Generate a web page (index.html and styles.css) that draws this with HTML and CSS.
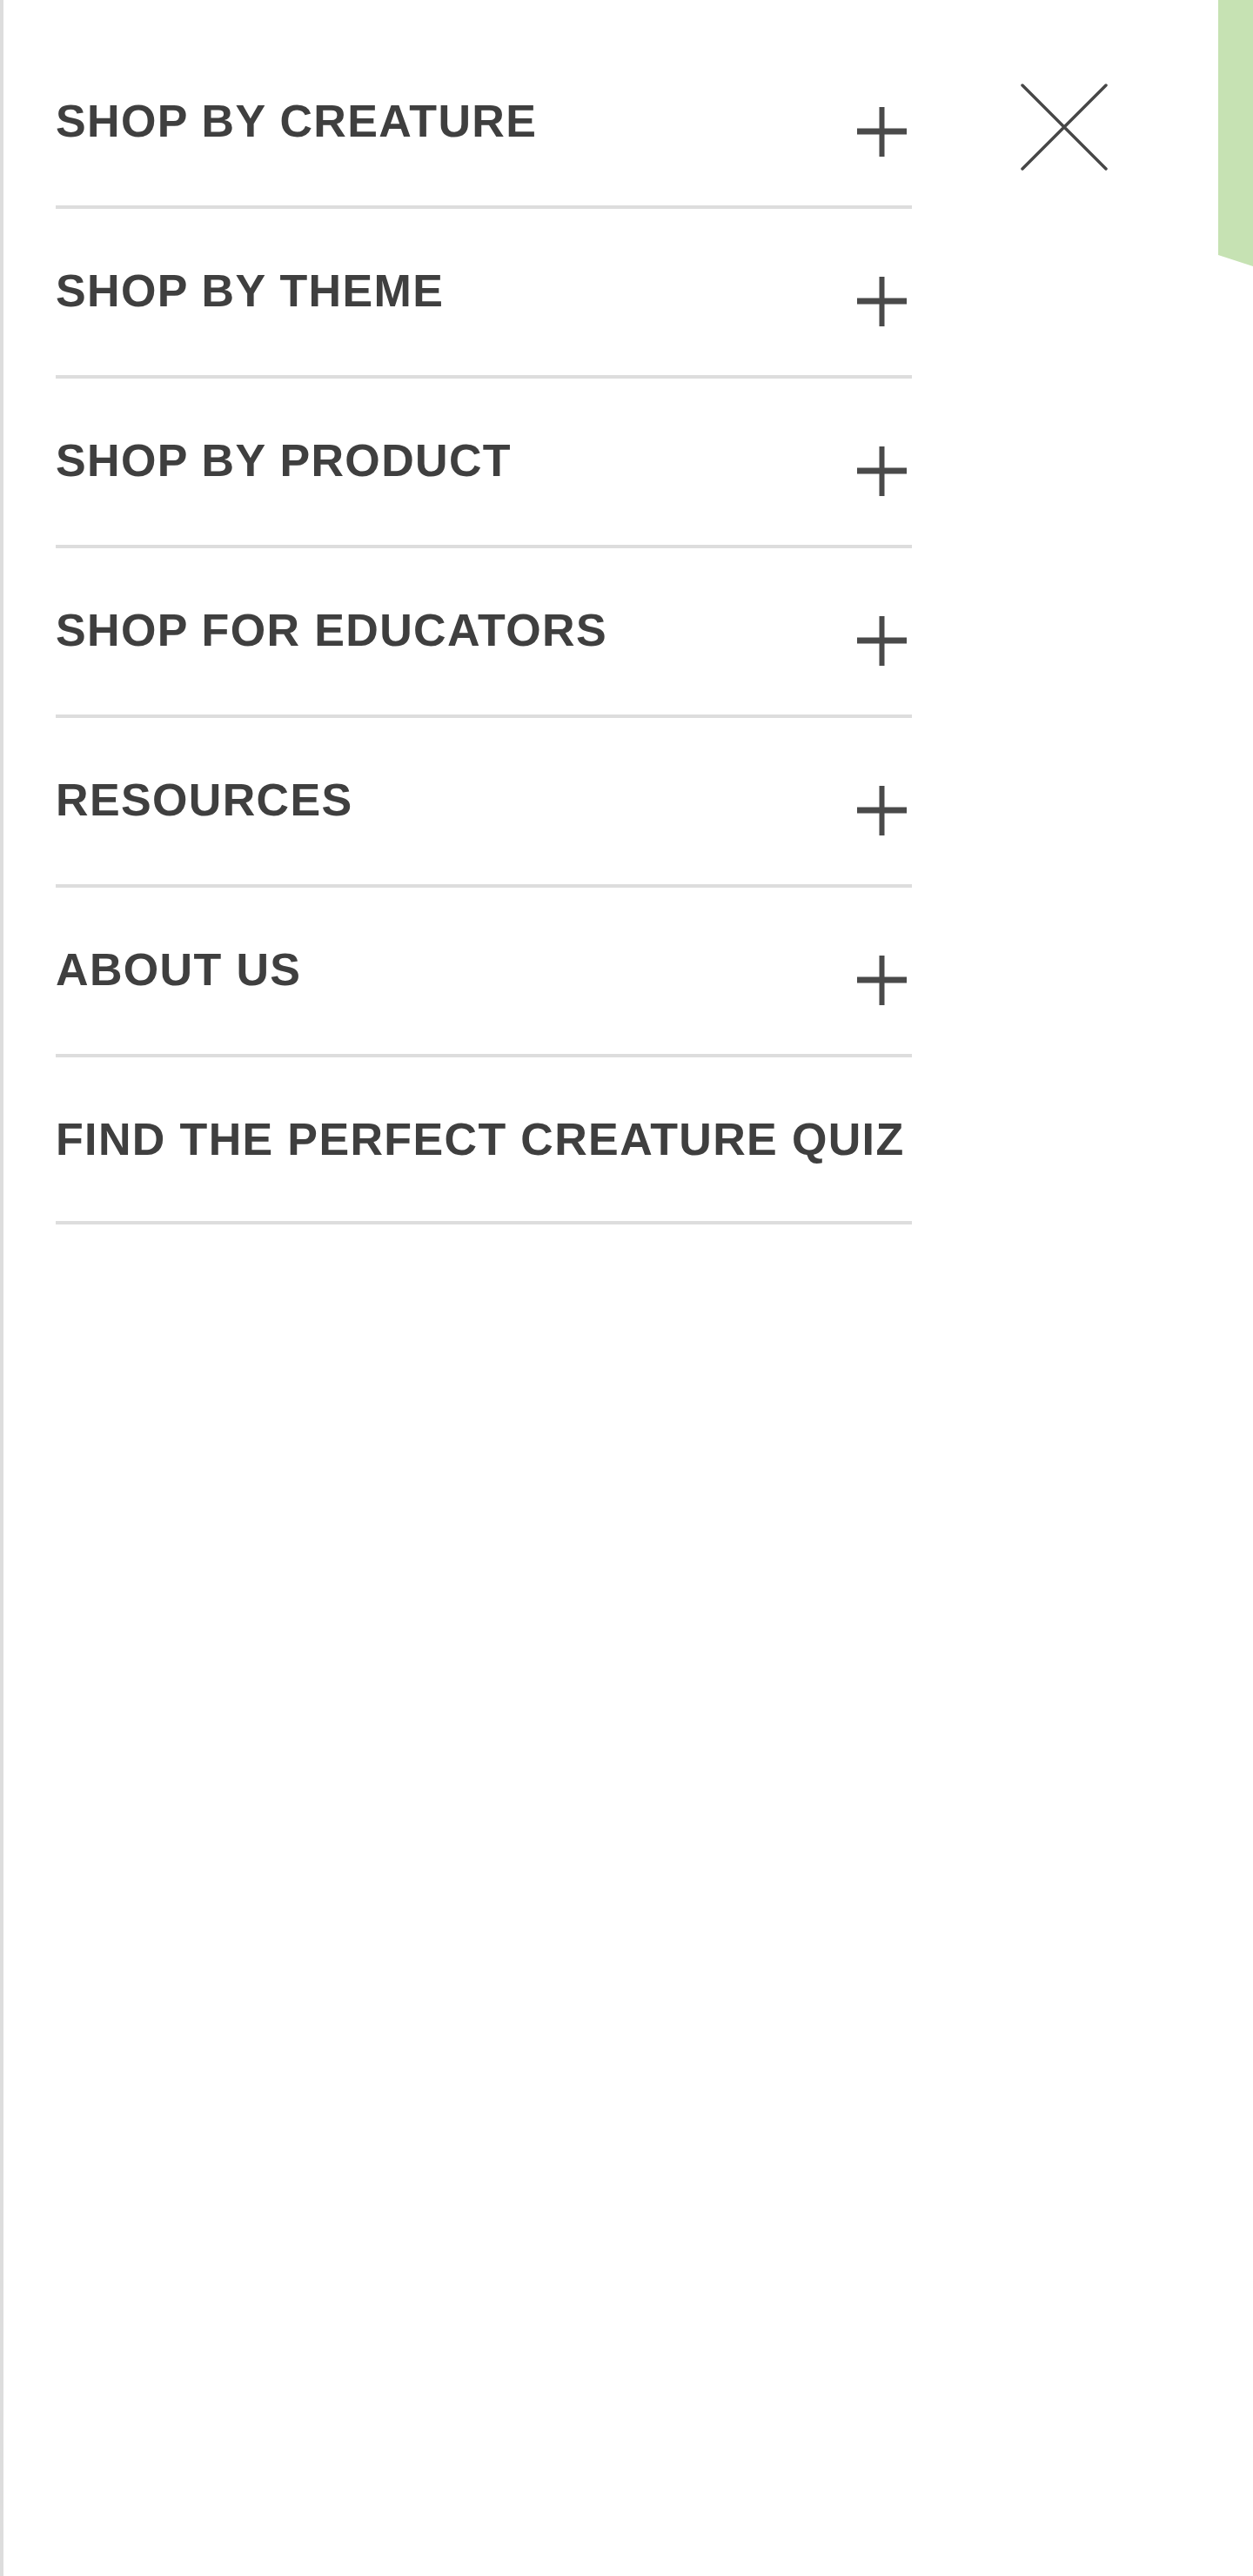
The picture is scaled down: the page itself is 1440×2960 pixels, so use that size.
FILE: index.html
```html
<!DOCTYPE html>
<html lang="en">
<head>
<meta charset="utf-8">
<title>Menu</title>
<link rel="stylesheet" href="styles.css">
</head>
<body>
<div class="page-peek" aria-hidden="true"></div>
<aside class="drawer">
  <button class="close" aria-label="Close menu">
    <svg width="100" height="100" viewBox="0 0 100 100"><path d="M2 2 L98 98 M98 2 L2 98" stroke="#474747" stroke-width="3.5" stroke-linecap="round" fill="none"/></svg>
  </button>
  <nav class="menu">
    <ul class="menu-list">
      <li class="menu-item"><a class="menu-link" href="#">SHOP BY CREATURE</a><button class="toggle" aria-label="Expand"><svg width="57" height="57" viewBox="0 0 57 57"><rect x="0" y="24.5" width="57" height="7" fill="#4a4a4a"/><rect x="25.5" y="0" width="6" height="57" fill="#4a4a4a"/></svg></button></li>
      <li class="menu-item"><a class="menu-link" href="#">SHOP BY THEME</a><button class="toggle" aria-label="Expand"><svg width="57" height="57" viewBox="0 0 57 57"><rect x="0" y="24.5" width="57" height="7" fill="#4a4a4a"/><rect x="25.5" y="0" width="6" height="57" fill="#4a4a4a"/></svg></button></li>
      <li class="menu-item"><a class="menu-link" href="#">SHOP BY PRODUCT</a><button class="toggle" aria-label="Expand"><svg width="57" height="57" viewBox="0 0 57 57"><rect x="0" y="24.5" width="57" height="7" fill="#4a4a4a"/><rect x="25.5" y="0" width="6" height="57" fill="#4a4a4a"/></svg></button></li>
      <li class="menu-item"><a class="menu-link" href="#">SHOP FOR EDUCATORS</a><button class="toggle" aria-label="Expand"><svg width="57" height="57" viewBox="0 0 57 57"><rect x="0" y="24.5" width="57" height="7" fill="#4a4a4a"/><rect x="25.5" y="0" width="6" height="57" fill="#4a4a4a"/></svg></button></li>
      <li class="menu-item"><a class="menu-link" href="#">RESOURCES</a><button class="toggle" aria-label="Expand"><svg width="57" height="57" viewBox="0 0 57 57"><rect x="0" y="24.5" width="57" height="7" fill="#4a4a4a"/><rect x="25.5" y="0" width="6" height="57" fill="#4a4a4a"/></svg></button></li>
      <li class="menu-item"><a class="menu-link" href="#">ABOUT US</a><button class="toggle" aria-label="Expand"><svg width="57" height="57" viewBox="0 0 57 57"><rect x="0" y="24.5" width="57" height="7" fill="#4a4a4a"/><rect x="25.5" y="0" width="6" height="57" fill="#4a4a4a"/></svg></button></li>
      <li class="menu-item"><a class="menu-link" href="#">FIND THE PERFECT CREATURE QUIZ</a></li>
    </ul>
  </nav>
</aside>
</body>
</html>
```
FILE: styles.css
```css
html, body {
  margin: 0;
  padding: 0;
  background: #ffffff;
}

body {
  font-family: "Liberation Sans", Arial, sans-serif;
  color: #3f3f3f;
  position: relative;
  min-height: 2960px;
}

.page-peek {
  position: absolute;
  top: 0;
  right: 0;
  width: 40px;
  height: 306px;
  background: #c6e2b3;
  clip-path: polygon(0 0, 100% 0, 100% 100%, 0 293px);
}

.drawer {
  position: relative;
  box-sizing: border-box;
  width: 1400px;
  min-height: 2960px;
  border-left: 4px solid #dddddd;
  padding: 45px 0 0 60px;
  background: #ffffff;
}

.close {
  position: absolute;
  left: 1169px;
  top: 96px;
  width: 100px;
  height: 100px;
  padding: 0;
  border: 0;
  background: transparent;
  cursor: pointer;
}

.close svg {
  display: block;
}

.menu {
  width: 984px;
}

.menu-list {
  list-style: none;
  margin: 0;
  padding: 0;
}

.menu-item {
  display: flex;
  align-items: flex-start;
  justify-content: space-between;
  padding: 64px 0;
  border-bottom: 4px solid #dddddd;
}

.menu-link {
  display: block;
  font-size: 52px;
  font-weight: 700;
  line-height: 60px;
  letter-spacing: 1.35px;
  color: #3f3f3f;
  text-decoration: none;
  white-space: nowrap;
}

.toggle {
  width: 57px;
  height: 63px;
  margin-right: 6px;
  padding: 14px 0 0;
  border: 0;
  background: transparent;
  box-sizing: border-box;
  cursor: pointer;
}

.toggle svg {
  display: block;
}
```
